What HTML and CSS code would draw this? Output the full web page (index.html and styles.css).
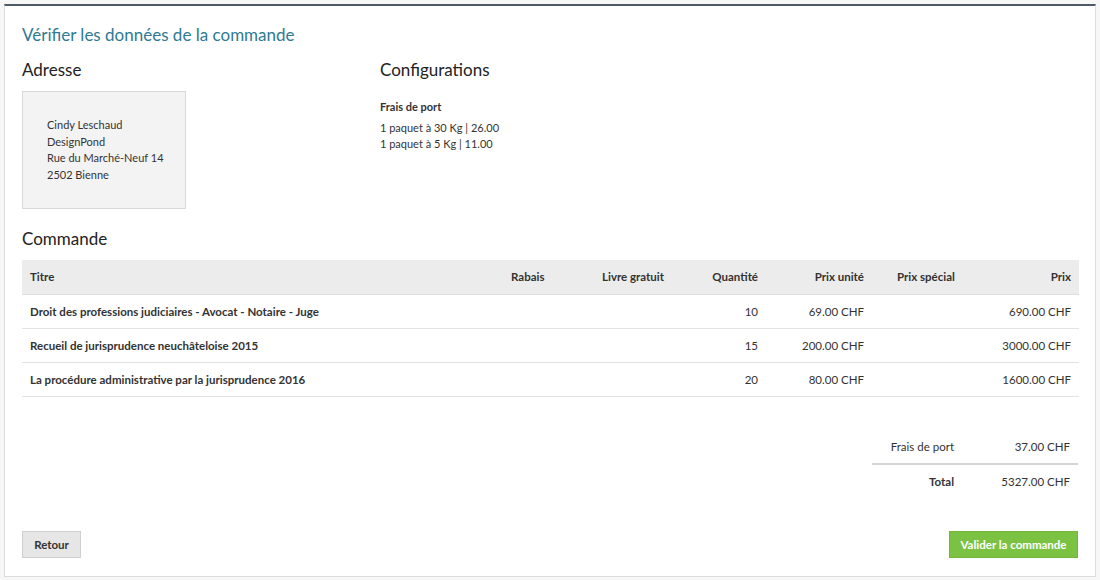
FILE: index.html
```html
<!DOCTYPE html>
<html lang="fr">
<head>
<meta charset="utf-8">
<link rel="stylesheet" href="styles.css">
</head>
<body>
<div class="panel">
  <h1 class="title">Vérifier les données de la commande</h1>
  <div class="top">
    <section class="col-address">
      <h2 class="h2">Adresse</h2>
      <div class="address">
        <div>Cindy Leschaud</div>
        <div>DesignPond</div>
        <div>Rue du Marché-Neuf 14</div>
        <div>2502 Bienne</div>
      </div>
    </section>
    <section class="col-config">
      <h2 class="h2">Configurations</h2>
      <div class="config">
        <div class="config-title">Frais de port</div>
        <div>1 paquet à 30 Kg | 26.00</div>
        <div>1 paquet à 5 Kg | 11.00</div>
      </div>
    </section>
  </div>
  <h2 class="h2 h2-order">Commande</h2>
  <table class="order">
    <colgroup>
      <col class="c-titre"><col class="c-rabais"><col class="c-livre"><col class="c-qte"><col class="c-pu"><col class="c-ps"><col class="c-prix">
    </colgroup>
    <thead>
      <tr>
        <th>Titre</th>
        <th>Rabais</th>
        <th>Livre gratuit</th>
        <th class="r">Quantité</th>
        <th class="r">Prix unité</th>
        <th class="ps">Prix spécial</th>
        <th class="r">Prix</th>
      </tr>
    </thead>
    <tbody>
      <tr>
        <td class="b">Droit des professions judiciaires - Avocat - Notaire - Juge</td>
        <td></td><td></td>
        <td class="r">10</td>
        <td class="r">69.00 CHF</td>
        <td></td>
        <td class="r">690.00 CHF</td>
      </tr>
      <tr>
        <td class="b">Recueil de jurisprudence neuchâteloise 2015</td>
        <td></td><td></td>
        <td class="r">15</td>
        <td class="r">200.00 CHF</td>
        <td></td>
        <td class="r">3000.00 CHF</td>
      </tr>
      <tr>
        <td class="b">La procédure administrative par la jurisprudence 2016</td>
        <td></td><td></td>
        <td class="r">20</td>
        <td class="r">80.00 CHF</td>
        <td></td>
        <td class="r">1600.00 CHF</td>
      </tr>
    </tbody>
  </table>
  <div class="totals-wrap">
    <table class="totals">
      <tr class="t-ship">
        <td class="t-label">Frais de port</td>
        <td class="t-val">37.00 CHF</td>
      </tr>
      <tr class="t-total">
        <td class="t-label b">Total</td>
        <td class="t-val">5327.00 CHF</td>
      </tr>
    </table>
  </div>
  <div class="actions">
    <button class="btn btn-back">Retour</button>
    <button class="btn btn-ok">Valider la commande</button>
  </div>
</div>
</body>
</html>
```
FILE: styles.css
```css
* { box-sizing: border-box; }
html, body { margin: 0; padding: 0; background: #f7f7f7; }
body {
  font-family: "Lato", "Liberation Sans", sans-serif;
  color: #333;
  font-size: 12px;
  padding: 4px 4px 0 4px;
}
.panel {
  background: #fff;
  border: 1px solid #dcdcdc;
  border-top: 2px solid #4e5a68;
  padding: 18px 17px 18px 17px;
  height: 573px;
}
.title {
  margin: 0;
  font-weight: 400;
  font-size: 17px;
  line-height: 22px;
  color: #2f7a92;
}
.top { display: flex; margin-top: 12px; }
.col-address { width: 358px; }
.h2 {
  margin: 0;
  font-weight: 400;
  font-size: 17px;
  line-height: 24px;
  color: #222;
}
.address {
  margin-top: 9px;
  width: 164px;
  height: 118px;
  background: #f3f3f3;
  border: 1px solid #d8d8d8;
  padding: 25px 0 0 24px;
  line-height: 16.7px;
  font-size: 11px;
}
.config { margin-top: 17px; font-size: 11px; line-height: 16.7px; }
.config-title { font-weight: 700; margin-bottom: 4px; }
.h2-order { margin-top: 18px; }
.order {
  margin-top: 9px;
  width: 1057px;
  border-collapse: collapse;
  table-layout: fixed;
  font-size: 11.5px;
}
.c-titre { width: 481px; }
.c-rabais { width: 91px; }
.c-livre { width: 86px; }
.c-qte { width: 86px; }
.c-pu { width: 106px; }
.c-ps { width: 108px; }
.c-prix { width: 99px; }
.order th, .order td {
  height: 34px;
  padding: 0 8px;
  text-align: left;
  vertical-align: middle;
  border-bottom: 1px solid #e3e3e3;
}
.order thead th { background: #ececec; font-weight: 700; border-bottom: 1px solid #dedede; }
.order .r { text-align: right; }
.order .ps { padding-left: 25px; }
.b { font-weight: 700; }
.totals-wrap { display: flex; justify-content: flex-end; margin-top: 33px; }
.totals { border-collapse: collapse; width: 206px; font-size: 11.5px; }
.totals td { height: 34px; padding: 0 8px; text-align: right; vertical-align: middle; }
.t-label { width: 90px; }
.t-ship td { border-bottom: 2px solid #d4d4d4; }
.actions {
  display: flex;
  justify-content: space-between;
  margin-top: 33px;
}
.btn {
  font-family: inherit;
  font-weight: 700;
  font-size: 11.5px;
  height: 27px;
  border-radius: 0;
  cursor: pointer;
}
.btn-back {
  background: #e6e6e6;
  border: 1px solid #cfcfcf;
  color: #333;
  width: 59px;
}
.btn-ok {
  background: #7cc242;
  border: 1px solid #74b73c;
  color: #fff;
  width: 129px;
}
```
